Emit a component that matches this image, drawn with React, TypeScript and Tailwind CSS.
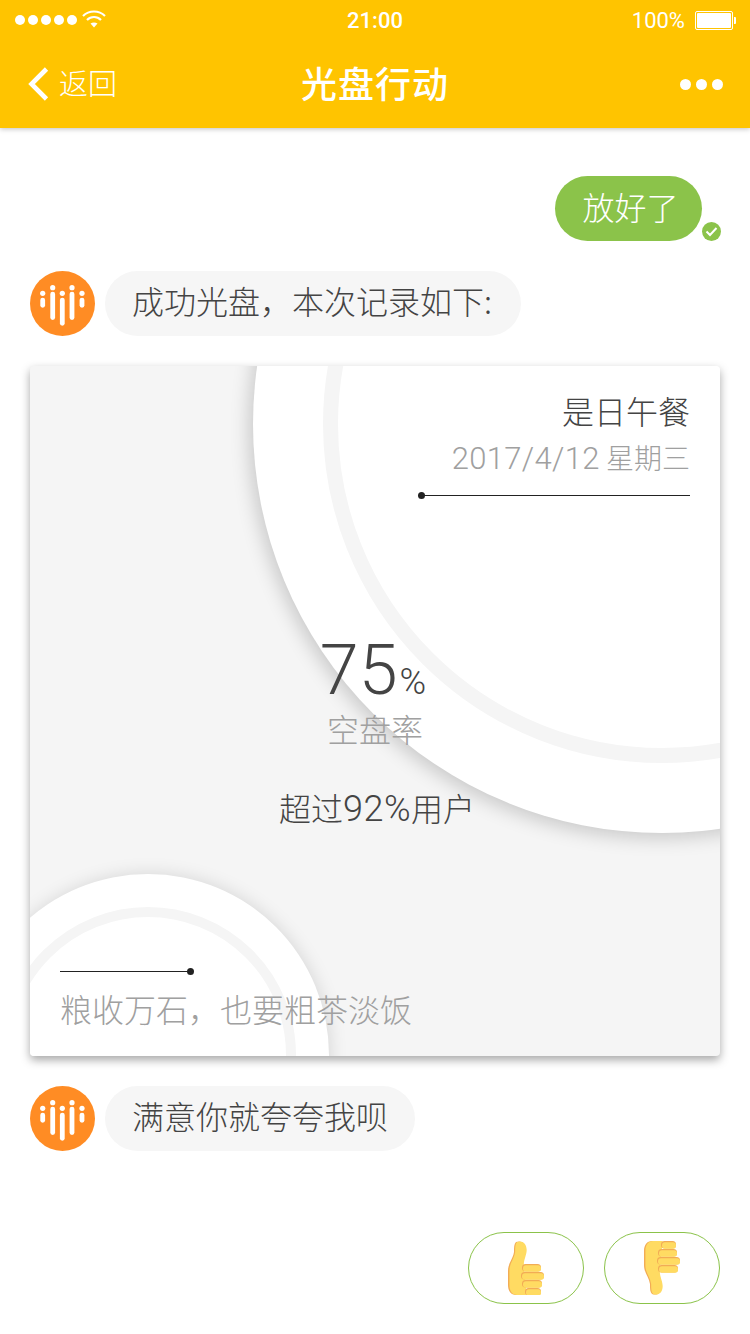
import React from "react";

const CJK = "font-['Noto_Sans_CJK_SC','Noto_Sans',sans-serif]";

function Logo() {
  const bars: [number, number, number, number][] = [
    [12.7, 22.3, 26.7, 36.7],
    [22.7, 16.7, 20.7, 49],
    [32.3, 22.3, 26.7, 54.7],
    [42, 16.7, 20.7, 49],
    [52, 22.3, 26.7, 36.7],
  ];
  return (
    <svg width="65" height="65" viewBox="0 0 65 65" className="shrink-0">
      <circle cx="32.5" cy="32.5" r="32.5" fill="#FF8C24" />
      {bars.map(([x, d, a, b]) => (
        <g key={x} fill="#fff">
          <circle cx={x} cy={d} r="2.6" />
          <rect x={x - 2.4} y={a} width="4.8" height={b - a} rx="2.4" />
        </g>
      ))}
    </svg>
  );
}

function Thumb({ down }: { down?: boolean }) {
  const fingers: [number, number, number][] = [
    [14, 23, 33],
    [13, 31, 36],
    [14, 39, 34],
    [17, 47, 33],
  ];
  const fingersDown: [number, number, number][] = [
    [17, 0, 32],
    [14, 8, 33],
    [13, 16, 36],
    [14, 24, 34],
  ];
  const list = down ? fingersDown : fingers;
  const body =
    "M8 1 C13 -1 18 2 18 9 C18 14 15 18 15 24 L18 54 L8 54 C3 54 0 50 0 44 L0 30 C0 22 5 18 6 11 C6 6 6 3 8 1 Z";
  return (
    <svg width="36" height="54" viewBox="0 0 36 54">
      <g transform={down ? "translate(0 54) scale(1 -1)" : undefined}>
        <path d={body} fill="#F2AC55" />
        <path d={body} fill="#FFDB62" transform="translate(1.4 0) scale(0.96 1)" />
      </g>
      {list.map(([x, y, r]) => (
        <g key={y}>
          <rect x={x} y={y} width={r - x} height="7.5" rx="3.5" fill="#F2AC55" />
          <rect x={x + 1} y={y + 1.2} width={r - x - 1} height="6.6" rx="3" fill="#FFDB62" />
        </g>
      ))}
    </svg>
  );
}

function BotRow({ text, width }: { text: string; width: string }) {
  return (
    <div className="flex items-center gap-[10px]">
      <Logo />
      <div className={`h-[65px] rounded-[32.5px] bg-[#F6F6F6] flex items-center pl-[27px] pb-[8px] text-[32px] leading-[32px] font-light text-[#444444] whitespace-nowrap ${width}`}>
        {text}
      </div>
    </div>
  );
}

export default function App() {
  return (
    <div className={`w-[750px] h-[1334px] bg-white overflow-hidden ${CJK}`}>
      <header className="h-[128px] bg-[#FFC400] text-white shadow-[0_1px_5px_rgba(0,0,0,0.25)] relative z-10">
        <div className="h-[40px] relative flex items-center justify-between pl-[15px] pr-[14px]">
          <div className="flex items-center">
            <div className="flex gap-[3px]">
              {[0, 1, 2, 3, 4].map((i) => (
                <span key={i} className="w-[10px] h-[10px] rounded-full bg-white" />
              ))}
            </div>
            <svg width="24" height="18" viewBox="0 0 24 18" className="ml-[5px] -mt-[3px]" fill="none" stroke="#fff" strokeWidth="2.2">
              <path d="M1 6 C7 0 17 0 23 6" />
              <path d="M5 10 C9 6 15 6 19 10" />
              <path d="M12 17.5 L8.5 13.5 C10.5 12 13.5 12 15.5 13.5 Z" fill="#fff" stroke="none" />
            </svg>
          </div>
          <div className="absolute left-0 right-0 text-center text-[22px] font-medium font-['Roboto',sans-serif]">21:00</div>
          <div className="flex items-center">
            <span className="text-[22px] font-['Roboto',sans-serif]">100%</span>
            <div className="ml-[10px] w-[38px] h-[19px] border border-white rounded-[2px] p-[1px]">
              <div className="w-full h-full bg-white rounded-[1px]" />
            </div>
            <div className="ml-[1px] w-[2px] h-[7px] bg-white rounded-r-[1px]" />
          </div>
        </div>
        <div className="h-[88px] relative flex items-center justify-between pl-[28px] pr-[27px]">
          <div className="flex items-center">
            <svg width="21" height="34" viewBox="0 0 21 34" fill="none" stroke="#fff" strokeWidth="4.6">
              <path d="M18.5 2 L3.5 17 L18.5 32" />
            </svg>
            <span className="ml-[10px] pb-[3px] text-[29px] font-light leading-none">返回</span>
          </div>
          <div className="absolute left-0 right-0 pb-[4px] text-center text-[36px] leading-none font-medium tracking-[1px]">光盘行动</div>
          <div className="flex gap-[5px]">
            {[0, 1, 2].map((i) => (
              <span key={i} className="w-[11px] h-[11px] rounded-full bg-white" />
            ))}
          </div>
        </div>
      </header>

      <main className="px-[30px] pt-[48px]">
        <div className="flex justify-end pr-[18px]">
          <div className="relative h-[65px] w-[147px] rounded-[32.5px] bg-[#8BC34A] text-white text-[32px] leading-[32px] font-light flex items-center justify-center pl-[4px] pb-[6px]">
            放好了
            <svg width="19" height="19" viewBox="0 0 19 19" className="absolute left-[147px] top-[46px]">
              <circle cx="9.5" cy="9.5" r="9.5" fill="#8BC34A" />
              <path d="M4.5 9.5 L8 13 L14.5 6" fill="none" stroke="#fff" strokeWidth="2" />
            </svg>
          </div>
        </div>

        <div className="mt-[30px]">
          <BotRow text="成功光盘，本次记录如下:" width="w-[416px]" />
        </div>

        <section className="mt-[30px] relative w-[690px] h-[690px] bg-[#F5F5F5] rounded-[4px] shadow-[0_4px_10px_rgba(0,0,0,0.35)] overflow-hidden flex flex-col">
          <div className="absolute left-[223px] top-[-351px] w-[818px] h-[818px] rounded-full bg-white shadow-[-3px_4px_20px_rgba(0,0,0,0.2)] flex items-center justify-center">
            <div className="w-[678px] h-[678px] rounded-full border-[15px] border-[#F5F5F5]" />
          </div>
          <div className="absolute left-[-63px] top-[508px] w-[362px] h-[362px] rounded-full bg-white shadow-[1px_0_18px_rgba(0,0,0,0.13)] flex items-center justify-center">
            <div className="w-[296px] h-[296px] rounded-full border-[10px] border-[#F5F5F5]" />
          </div>

          <div className="relative flex flex-col items-end pt-[28px] pr-[30px]">
            <div className="h-[32px] text-[32px] leading-[32px] font-light text-[#444444]">是日午餐</div>
            <div className="mt-[15px] h-[32px] text-[28px] leading-[32px] font-light text-[#A0A0A0] whitespace-nowrap">
              <span className="font-['Roboto',sans-serif] text-[31px] tracking-[0.35px]">2017/4/12</span> 星期三
            </div>
            <div className="mt-[22px] relative w-[269px] h-[1px] bg-[#222222]">
              <span className="absolute left-[-3px] top-[-3px] w-[7px] h-[7px] rounded-full bg-[#222222]" />
            </div>
          </div>

          <div className="relative flex flex-col items-center mt-[138px]">
            <div className="h-[72px] pr-[4px] flex items-baseline text-[#444444] font-['Roboto',sans-serif] font-light leading-[72px]">
              <span className="text-[70px]">75</span>
              <span className="text-[36px] ml-[2px]">%</span>
            </div>
            <div className="mt-[6px] h-[32px] text-[32px] leading-[32px] font-light text-[#A0A0A0]">空盘率</div>
            <div className="mt-[47px] h-[32px] pl-[4px] text-[32px] leading-[32px] font-light text-[#444444] whitespace-nowrap">
              超过<span className="font-['Roboto',sans-serif] text-[36px] tracking-[0.5px]">92%</span>用户
            </div>
          </div>

          <div className="relative pl-[30px] mt-[148px]">
            <div className="relative w-[130px] h-[1px] bg-[#222222]">
              <span className="absolute right-[-4px] top-[-3px] w-[7px] h-[7px] rounded-full bg-[#222222]" />
            </div>
            <div className="mt-[20px] h-[32px] text-[32px] leading-[32px] font-light text-[#A0A0A0] whitespace-nowrap">粮收万石，也要粗茶淡饭</div>
          </div>
        </section>

        <div className="mt-[30px]">
          <BotRow text="满意你就夸夸我呗" width="w-[310px]" />
        </div>

        <div className="mt-[81px] flex justify-end gap-[20px]">
          <button className="w-[116px] h-[72px] rounded-full border border-[#8BC34A] bg-white flex items-center justify-center">
            <Thumb />
          </button>
          <button className="w-[116px] h-[72px] rounded-full border border-[#8BC34A] bg-white flex items-center justify-center">
            <Thumb down />
          </button>
        </div>
      </main>
    </div>
  );
}
